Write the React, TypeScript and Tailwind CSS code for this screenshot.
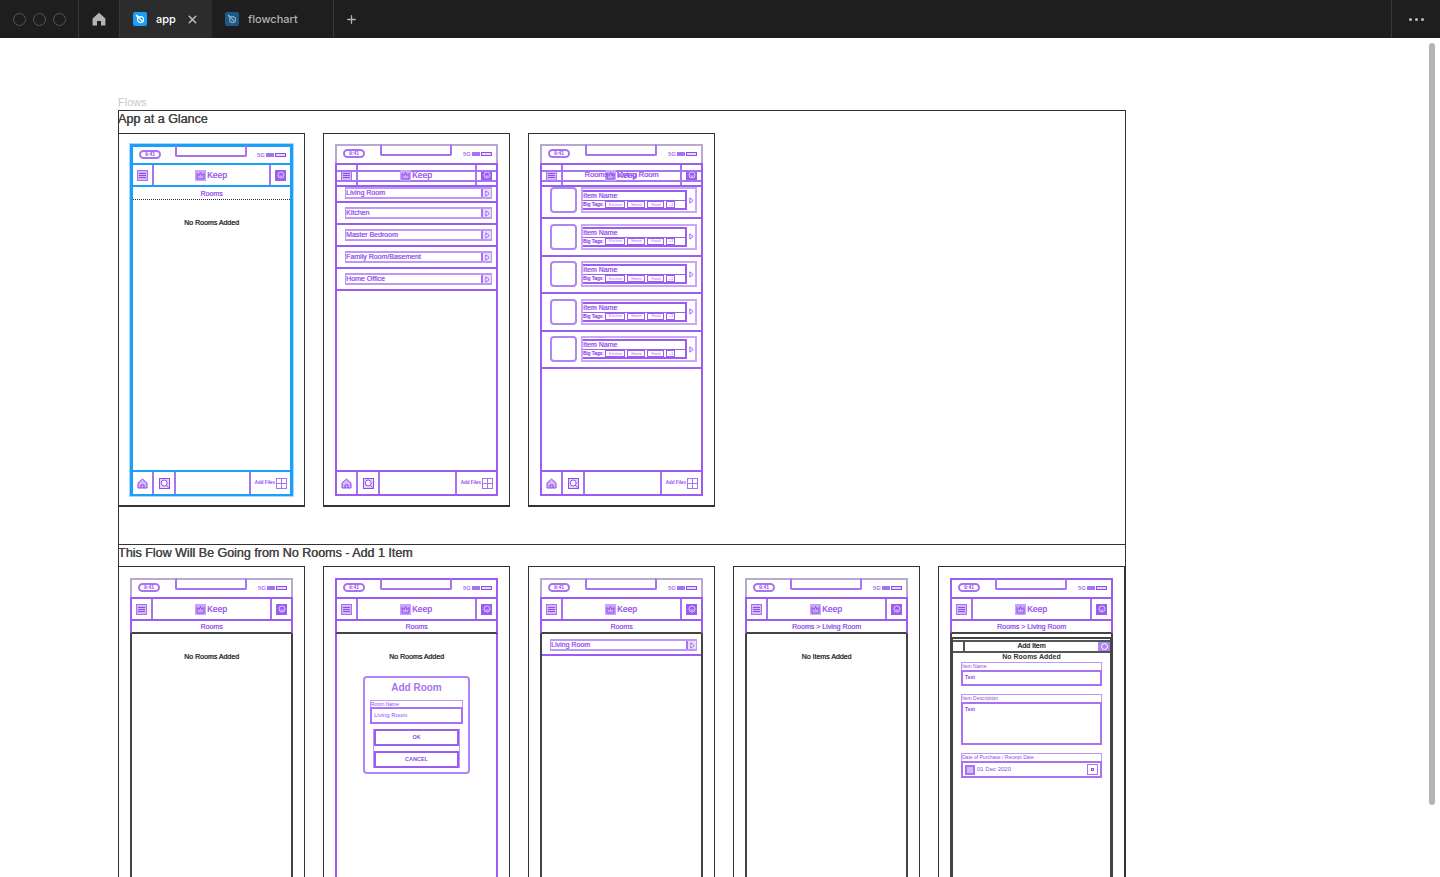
import React from 'react';
import { X, Plus } from 'lucide-react';

// doubled-up look of figma's low zoom text
const THICK = '[text-shadow:0.35px_0_0_currentColor]';

const FigmaMark: React.FC<{ className: string; stroke: string }> = ({ className, stroke }) => (
  <div className={`w-[14px] h-[14px] rounded-[2px] flex items-center justify-center ${className}`}>
    <svg viewBox="0 0 14 14" className="w-[14px] h-[14px]" fill="none" stroke={stroke} strokeWidth="1.1">
      <circle cx="7.6" cy="7.6" r="3" />
      <path d="M3 3 L6 5 M3 3 L5 6 M3 3 L9.5 9.5" />
    </svg>
  </div>
);

const TitleBar = () => (
  <div className="h-[38px] bg-[#1e1e1e] flex items-stretch text-[11px] font-['Inter',sans-serif] shrink-0">
    <div className="w-[79px] flex items-center gap-[7px] pl-[13px] border-r border-[#383838]">
      <div className="w-[13px] h-[13px] rounded-full border border-[#555]" />
      <div className="w-[13px] h-[13px] rounded-full border border-[#555]" />
      <div className="w-[13px] h-[13px] rounded-full border border-[#555]" />
    </div>
    <div className="w-[41px] flex items-center justify-center border-r border-[#383838]">
      <svg viewBox="0 0 14 14" className="w-[14px] h-[14px]" fill="#b4b4b4">
        <path d="M7 .8 L13.4 6.6 V13.4 H9 V9 H5 V13.4 H.6 V6.6 Z" />
      </svg>
    </div>
    <div className="w-[92px] bg-[#2c2c2c] flex items-center pl-[13px] text-white">
      <FigmaMark className="bg-[#18a0fb]" stroke="#ffffff" />
      <span className="ml-[9px] font-medium">app</span>
      <X className="ml-[10px] w-[13px] h-[13px] text-[#c4c4c4]" strokeWidth={2.6} />
    </div>
    <div className="w-[122px] flex items-center pl-[13px] text-[#b4b4b4] border-r border-[#383838]">
      <FigmaMark className="bg-[#1a5a85]" stroke="#8fa9ba" />
      <span className="ml-[9px] font-medium">flowchart</span>
    </div>
    <div className="w-[35px] flex items-center justify-center">
      <Plus className="w-[13px] h-[13px] text-[#b4b4b4]" strokeWidth={2.4} />
    </div>
    <div className="flex-1" />
    <div className="w-[49px] flex items-center justify-center gap-[3px] border-l border-[#383838]">
      <div className="w-[3px] h-[3px] rounded-full bg-[#bdbdbd]" />
      <div className="w-[3px] h-[3px] rounded-full bg-[#bdbdbd]" />
      <div className="w-[3px] h-[3px] rounded-full bg-[#bdbdbd]" />
    </div>
  </div>
);

const MenuIcon = () => (
  <div className="w-[11px] h-[11px] bg-[#d3b8fa] border border-[#a873f3] flex flex-col justify-center gap-px px-px">
    <div className="h-px bg-[#8f4bee]" />
    <div className="h-px bg-[#8f4bee]" />
    <div className="h-px bg-[#8f4bee]" />
  </div>
);

const ProfileIcon = () => (
  <div className="w-[11px] h-[11px] bg-[#9b5cf0] flex items-center justify-center">
    <svg viewBox="0 0 9 9" className="w-[8px] h-[8px]" fill="none" stroke="#e6d6fd" strokeWidth="1">
      <circle cx="4.5" cy="4.5" r="3.4" />
      <path d="M2.8 5.4 Q4.5 6.8 6.2 5.4" />
    </svg>
  </div>
);

const KeepLogo = () => (
  <div className="flex items-center -ml-[1px]">
    <div className="w-[11px] h-[11px] bg-[#c9a6f9] flex items-center justify-center">
      <svg viewBox="0 0 9 9" className="w-[9px] h-[9px]" fill="none" stroke="#8f4bee" strokeWidth="1">
        <path d="M1 8 V2.5 L3 4.5 L4.5 1.5 L6 4.5 L8 2.5 V8 Z" />
      </svg>
    </div>
    <span className={`ml-px text-[8.5px] leading-none text-[#9b5cf0] ${THICK}`}>Keep</span>
  </div>
);

const Nav: React.FC<{ double?: boolean; overlay?: string; cls: string }> = ({ double, overlay, cls }) => (
  <div className={`relative h-[24px] border-2 flex items-stretch ${cls}`}>
    {double && <div className="absolute left-0 right-0 top-[5px] bottom-[3px] border-y-2 border-[#a873f3]" />}
    <div className="w-[21px] flex items-center justify-center border-r-2 border-[#a873f3]"><MenuIcon /></div>
    <div className="relative flex-1 flex items-center justify-center">
      <KeepLogo />
      {overlay && <span className={`absolute inset-0 flex items-center justify-center text-[7.5px] text-[#9b5cf0] ${THICK}`}>{overlay}</span>}
    </div>
    <div className="w-[21px] flex items-center justify-center border-l-2 border-[#a873f3]"><ProfileIcon /></div>
  </div>
);

const StatusBar: React.FC<{ cls: string }> = ({ cls }) => (
  <div className={`h-[19px] border-x-2 border-t-2 flex items-start justify-between pl-[6px] pr-[4px] ${cls}`}>
    <div className="mt-[3px] w-[22px] h-[9px] rounded-full border-2 border-[#a873f3] flex items-center justify-center text-[5px] font-bold leading-none text-[#8f4bee]">9:41</div>
    <div className="-mt-[2px] ml-[4px] w-[72px] h-[12px] rounded-[2px] border-2 border-t-0 border-[#a873f3]" />
    <div className="mt-[5px] flex items-center gap-px">
      <span className="text-[6px] leading-none font-bold text-[#a873f3]">5G</span>
      <div className="w-[8px] h-[4px] bg-[#a873f3]" />
      <div className="w-[11px] h-[4px] border border-[#8f4bee] bg-[#e6d6fd]" />
    </div>
  </div>
);

const BottomBar: React.FC<{ cls: string }> = ({ cls }) => (
  <div className={`h-[26px] border-x-2 border-b-2 border-t-2 flex items-stretch mt-auto ${cls}`}>
    <div className="w-[21px] flex items-center justify-center border-r-2 border-[#a873f3]">
      <svg viewBox="0 0 11 11" className="w-[11px] h-[11px]" fill="#d3b8fa" stroke="#8f4bee" strokeWidth="1">
        <path d="M5.5 1 L10 5 V10 H1 V5 Z M4 10 V7 H7 V10" />
      </svg>
    </div>
    <div className="w-[22px] flex items-center justify-center border-r-2 border-[#a873f3]">
      <svg viewBox="0 0 11 11" className="w-[11px] h-[11px]" stroke="#8f4bee" strokeWidth="1" fill="#e6d6fd">
        <rect x=".5" y=".5" width="10" height="10" />
        <circle cx="5.2" cy="5" r="3" fill="#ffffff" />
        <path d="M7.4 7.4 L9.6 9.6" />
      </svg>
    </div>
    <div className="flex-1" />
    <div className="w-[41px] flex items-center justify-end pr-[3px] gap-px border-l-2 border-[#a873f3]">
      <span className="text-[4.5px] font-bold text-[#8f4bee] whitespace-nowrap">Add Files</span>
      <svg viewBox="0 0 11 11" className="w-[11px] h-[11px] shrink-0" fill="none" stroke="#a873f3" strokeWidth="1">
        <rect x=".5" y=".5" width="10" height="10" />
        <path d="M5.5 .5 V10.5 M.5 5.5 H10.5" />
      </svg>
    </div>
  </div>
);

type PhoneProps = {
  top: string;
  head: string;
  body: string;
  crumb?: string;
  rule?: string;
  double?: boolean;
  overlay?: string;
  halo?: boolean;
  bar?: boolean;
  children?: React.ReactNode;
};

const Phone: React.FC<PhoneProps> = ({ top, head, body, crumb, rule = 'border-b-2 border-[#9b5cf0]', double, overlay, halo, bar = true, children }) => (
  <div className={`w-[163px] h-[352px] flex flex-col bg-white ${halo ? 'shadow-[0_0_0_1px_#a8dafd]' : ''}`}>
    <StatusBar cls={top} />
    <Nav cls={head} double={double} overlay={overlay} />
    {crumb && (
      <div className={`h-[13px] border-x-2 flex items-center justify-center text-[7px] leading-none text-[#9b5cf0] ${THICK} ${head} ${rule}`}>{crumb}</div>
    )}
    <div className={`relative flex-1 border-x-2 flex flex-col min-h-0 ${body}`}>{children}</div>
    {bar && <BottomBar cls={body} />}
  </div>
);

const Empty: React.FC<{ label?: string }> = ({ label = 'No Rooms Added' }) => (
  <div className={`mt-[18px] text-center text-[7px] leading-[9px] text-[#333] ${THICK}`}>{label}</div>
);

const Arrow = () => (
  <div className="w-[10px] shrink-0 flex items-center justify-center bg-[#eadcfd] border-l-2 border-[#a873f3]">
    <svg viewBox="0 0 6 8" className="w-[5px] h-[7px]" fill="#ffffff" stroke="#8f4bee" strokeWidth="1">
      <path d="M1 .8 L5 4 L1 7.2 Z" />
    </svg>
  </div>
);

const RoomRow: React.FC<{ name: string; first?: boolean; lone?: boolean }> = ({ name, first, lone }) => (
  <div className={`border-b-2 border-[#9b5cf0] pl-[8px] pr-[4px] ${first ? 'h-[16px]' : lone ? 'h-[22px] pt-[5px]' : 'h-[22px] pt-[4px]'}`}>
    <div className="h-[12px] border border-[#bd98f8] border-y-2 flex items-stretch">
      <span className={`flex-1 text-[7px] leading-[8px] text-[#9b5cf0] whitespace-nowrap ${THICK}`}>{name}</span>
      <Arrow />
    </div>
  </div>
);

const Tag: React.FC<{ w: string; label: string }> = ({ w, label }) => (
  <div className={`h-[7px] shrink-0 border border-[#9b5cf0] flex items-center justify-center text-[4px] leading-none text-[#a873f3] ${w}`}>{label}</div>
);

const ItemRow: React.FC<{ first?: boolean }> = ({ first }) => (
  <div className={`border-b-2 border-[#9b5cf0] flex pl-[8px] pr-[4px] shrink-0 ${first ? 'h-[32px] items-start' : 'h-[37.5px] items-center'}`}>
    <div className="w-[27px] h-[26px] rounded-[4px] border-2 border-[#b285f6]" />
    <div className="ml-[4px] flex-1 h-[26px] border-2 border-[#c9a6f9] flex items-stretch">
      <div className="flex-1 my-[1px] border-y-2 border-r-2 border-[#9b5cf0] flex flex-col">
        <div className={`h-[9px] border-b border-[#9b5cf0] text-[7px] leading-[8px] text-[#9b5cf0] ${THICK}`}>Item Name</div>
        <div className="flex items-center gap-[2px] flex-1">
          <span className={`text-[5px] leading-none text-[#8f4bee] whitespace-nowrap ${THICK}`}>Big Tags:</span>
          <Tag w="w-[20px]" label="Kitchen" />
          <Tag w="w-[18px]" label="Home" />
          <Tag w="w-[17px]" label="Food" />
          <Tag w="w-[9px]" label="+1" />
        </div>
      </div>
      <div className="w-[8px] flex items-center justify-center">
        <svg viewBox="0 0 6 8" className="w-[5px] h-[7px]" fill="#ffffff" stroke="#8f4bee" strokeWidth="1">
          <path d="M1 .8 L5 4 L1 7.2 Z" />
        </svg>
      </div>
    </div>
  </div>
);

const Field: React.FC<{ label: string; box: string; children?: React.ReactNode }> = ({ label, box, children }) => (
  <div>
    <div className="h-[8px] border border-b-0 border-[#bd98f8] text-[5px] leading-[7px] text-[#8f4bee] whitespace-nowrap overflow-hidden">{label}</div>
    <div className={`border-2 border-[#a873f3] ${box}`}>{children}</div>
  </div>
);

const AddRoomModal = () => (
  <div className="mt-[15px] mx-auto w-[107px] h-[98px] rounded-[4px] border-2 border-[#b285f6] px-[5px] pt-[4px]">
    <div className="text-center text-[10px] leading-[12px] font-bold text-[#a873f3]">Add Room</div>
    <div className="mt-[6px] h-[7px] border border-b-0 border-[#bd98f8] text-[5px] leading-[6px] text-[#8f4bee]">Room Name</div>
    <div className="h-[17px] border-2 border-[#a873f3] pl-[2px] flex items-center text-[6px] text-[#8f4bee]">Living Room</div>
    <div className="mx-[3px] mt-[5px] border-x border-[#bd98f8]">
      <div className="h-[17px] border-2 border-[#9b5cf0] flex items-center justify-center text-[5.5px] font-bold text-[#8f4bee]">OK</div>
      <div className="h-[5px]" />
      <div className="h-[17px] border-2 border-[#9b5cf0] flex items-center justify-center text-[5.5px] font-bold text-[#8f4bee]">CANCEL</div>
    </div>
  </div>
);

const AddItemSheet = () => (
  <div className="relative mt-[3px] flex-1 rounded-t-[2px] border-2 border-b-0 border-[#444] -mx-px">
    <div className="mt-[1px] h-[13px] border-y-2 border-[#555] flex items-stretch">
      <div className="w-[12px] border-r-2 border-[#555]" />
      <div className={`flex-1 flex items-center justify-center text-[7px] text-[#333] ${THICK}`}>Add Item</div>
      <div className="w-[12px] bg-[#b285f6] flex items-center justify-center">
        <div className="w-[7px] h-[7px] rounded-full border border-white" />
      </div>
    </div>
    <div className="text-center text-[7px] leading-[8px] font-bold text-[#333]">No Rooms Added</div>
    <div className="mx-[8px] flex flex-col">
      <div className="mt-px"><Field label="Item Name" box="h-[16px] flex items-center pl-[2px] text-[5px] font-bold text-[#8f4bee]">Text</Field></div>
      <div className="mt-[8px]"><Field label="Item Description" box="h-[43px] pl-[2px] pt-[2px] text-[5px] leading-[7px] font-bold text-[#8f4bee]">Text</Field></div>
      <div className="mt-[8px]">
        <Field label="Date of Purchase / Receipt Date" box="h-[17px] flex items-center pl-[2px] pr-[2px] text-[6px] text-[#8f4bee]">
          <div className="w-[10px] h-[10px] bg-[#d3b8fa] border-2 border-[#a873f3] mr-[2px]" />
          <span>01 Dec 2020</span>
          <div className="ml-auto w-[11px] h-[11px] border border-[#a873f3] flex items-center justify-center">
            <div className="w-[3px] h-[3px] border border-[#8f4bee]" />
          </div>
        </Field>
      </div>
    </div>
  </div>
);

const Col: React.FC<{ lower?: boolean; children: React.ReactNode }> = ({ lower, children }) => (
  <div className={`w-[187px] h-[374px] shrink-0 border border-[#333] pl-[11px] ${lower ? 'pt-[11px]' : 'pt-[10px] border-b-2'}`}>{children}</div>
);

const P = 'border-[#9b5cf0]';
const G = 'border-[#b9a8d0]';
const D = 'border-[#444]';
const B = 'border-[#18a0fb]';
const DARK_RULE = 'border-b-2 border-b-[#444]';

const rooms = ['Living Room', 'Kitchen', 'Master Bedroom', 'Family Room/Basement', 'Home Office'];

export default function App() {
  return (
    <div className="relative h-[877px] overflow-hidden bg-white flex flex-col font-['Liberation_Sans',sans-serif]">
      <TitleBar />
      <div className="relative flex-1 overflow-hidden">
        {/* figma canvas */}
        <div className="absolute left-[118px] top-[58px] text-[11px] leading-[13px] text-[#c8c8c8]">Flows</div>
        <div className="absolute left-[118px] top-[72px] w-[1008px] h-[900px] border border-[#333] bg-white">
          <div className={`h-[22px] text-[12.5px] leading-[16px] text-[#444] whitespace-nowrap -ml-px ${THICK}`}>App at a Glance</div>
          <div className="flex gap-[18px] -ml-px">
            <Col>
              <Phone top="border-[#18a0fb] border-x-[3px] border-t-[3px]" head={`${B} border-x-[3px]`} body={`${B} border-x-[3px]`} crumb="Rooms" rule="" halo>
                <div className="-mt-px border-t border-dotted border-[#333]" />
                <Empty />
              </Phone>
            </Col>
            <Col>
              <Phone top={G} head={P} body={P} double>
                {rooms.map((r, i) => <RoomRow key={r} name={r} first={i === 0} />)}
              </Phone>
            </Col>
            <Col>
              <Phone top={G} head={P} body={P} double overlay="Rooms > Living Room">
                <ItemRow first />
                <ItemRow />
                <ItemRow />
                <ItemRow />
                <ItemRow />
              </Phone>
            </Col>
          </div>
          <div className={`mt-[37px] h-[22px] border-t border-[#333] text-[12.5px] leading-[16px] text-[#444] whitespace-nowrap -ml-px ${THICK}`}>This Flow Will Be Going from No Rooms - Add 1 Item</div>
          <div className="flex gap-[18px] -ml-px">
            <Col lower>
              <Phone top={G} head={P} body={D} crumb="Rooms" rule={DARK_RULE} bar={false}>
                <Empty />
              </Phone>
            </Col>
            <Col lower>
              <Phone top={P} head={P} body={P} crumb="Rooms" rule={DARK_RULE} bar={false}>
                <Empty />
                <AddRoomModal />
              </Phone>
            </Col>
            <Col lower>
              <Phone top={G} head={P} body={D} crumb="Rooms" rule={DARK_RULE} bar={false}>
                <RoomRow name="Living Room" lone />
              </Phone>
            </Col>
            <Col lower>
              <Phone top={G} head={P} body={D} crumb="Rooms > Living Room" rule={DARK_RULE} bar={false}>
                <Empty label="No Items Added" />
              </Phone>
            </Col>
            <Col lower>
              <Phone top={P} head={P} body={D} crumb="Rooms > Living Room" rule={DARK_RULE} bar={false}>
                <AddItemSheet />
              </Phone>
            </Col>
          </div>
        </div>
        {/* scrollbar */}
        <div className="absolute left-[1429px] top-[5px] w-[6px] h-[762px] rounded-full bg-[#b5b5b5]" />
      </div>
    </div>
  );
}
